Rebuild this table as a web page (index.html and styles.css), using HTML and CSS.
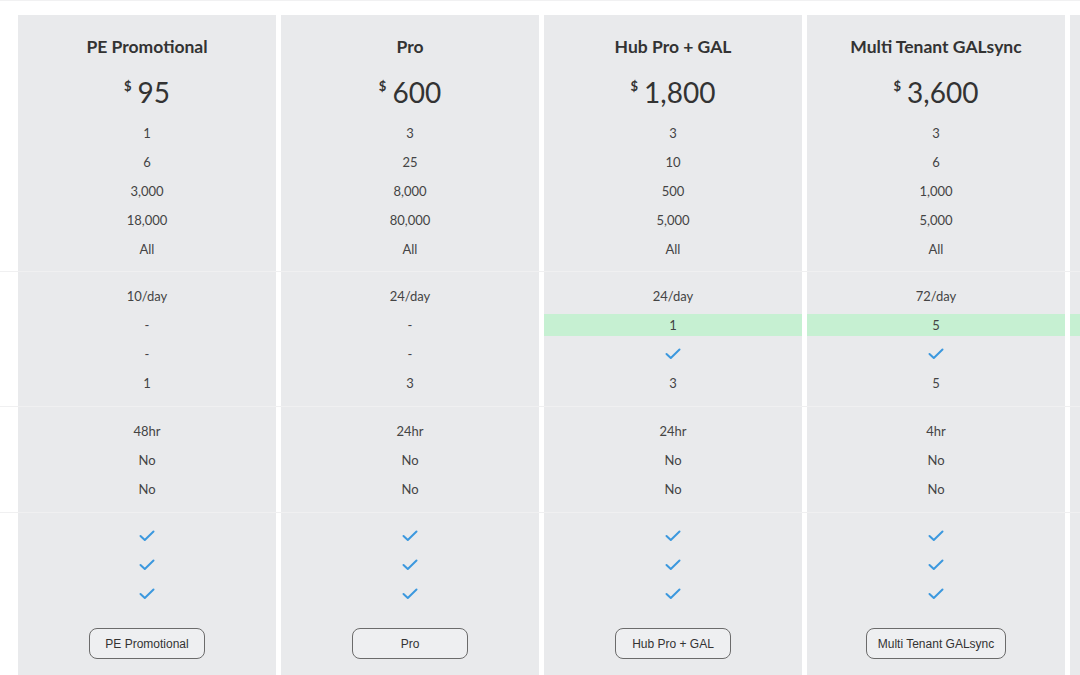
FILE: index.html
```html
<!DOCTYPE html>
<html lang="en">
<head>
<meta charset="utf-8">
<title>Pricing comparison</title>
<link rel="stylesheet" href="styles.css">
</head>
<body>
<svg width="0" height="0" class="defs" aria-hidden="true">
  <defs>
    <symbol id="tick" viewBox="0 0 16 12">
      <polyline points="1.5,6 5.8,10 14.5,1.5" fill="none" stroke="currentColor" stroke-width="2" stroke-linecap="round" stroke-linejoin="round"/>
    </symbol>
  </defs>
</svg>
<div class="page">
  <div class="table">
    <div class="row head">
      <div class="stub"></div>
      <div class="cell">
        <h3 class="plan">PE Promotional</h3>
        <div class="price"><span class="cur">$</span>95</div>
        <ul class="vals"><li>1</li><li>6</li><li>3,000</li><li>18,000</li><li>All</li></ul>
      </div>
      <div class="cell">
        <h3 class="plan">Pro</h3>
        <div class="price"><span class="cur">$</span>600</div>
        <ul class="vals"><li>3</li><li>25</li><li>8,000</li><li>80,000</li><li>All</li></ul>
      </div>
      <div class="cell">
        <h3 class="plan">Hub Pro + GAL</h3>
        <div class="price"><span class="cur">$</span>1,800</div>
        <ul class="vals"><li>3</li><li>10</li><li>500</li><li>5,000</li><li>All</li></ul>
      </div>
      <div class="cell">
        <h3 class="plan">Multi Tenant GALsync</h3>
        <div class="price"><span class="cur">$</span>3,600</div>
        <ul class="vals"><li>3</li><li>6</li><li>1,000</li><li>5,000</li><li>All</li></ul>
      </div>
      <div class="cell">
        <h3 class="plan">&nbsp;</h3>
        <div class="price">&nbsp;</div>
        <ul class="vals"><li>&nbsp;</li><li>&nbsp;</li><li>&nbsp;</li><li>&nbsp;</li><li>&nbsp;</li></ul>
      </div>
    </div>

    <div class="row">
      <div class="stub"></div>
      <div class="cell">
        <ul class="vals"><li>10/day</li><li>-</li><li>-</li><li>1</li></ul>
      </div>
      <div class="cell">
        <ul class="vals"><li>24/day</li><li>-</li><li>-</li><li>3</li></ul>
      </div>
      <div class="cell">
        <ul class="vals"><li>24/day</li><li class="hl">1</li><li><svg class="tick"><use href="#tick"/></svg></li><li>3</li></ul>
      </div>
      <div class="cell">
        <ul class="vals"><li>72/day</li><li class="hl">5</li><li><svg class="tick"><use href="#tick"/></svg></li><li>5</li></ul>
      </div>
      <div class="cell">
        <ul class="vals"><li>&nbsp;</li><li class="hl">&nbsp;</li><li>&nbsp;</li><li>&nbsp;</li></ul>
      </div>
    </div>

    <div class="row">
      <div class="stub"></div>
      <div class="cell"><ul class="vals"><li>48hr</li><li>No</li><li>No</li></ul></div>
      <div class="cell"><ul class="vals"><li>24hr</li><li>No</li><li>No</li></ul></div>
      <div class="cell"><ul class="vals"><li>24hr</li><li>No</li><li>No</li></ul></div>
      <div class="cell"><ul class="vals"><li>4hr</li><li>No</li><li>No</li></ul></div>
      <div class="cell"><ul class="vals"><li>&nbsp;</li><li>&nbsp;</li><li>&nbsp;</li></ul></div>
    </div>

    <div class="row last">
      <div class="stub"></div>
      <div class="cell">
        <ul class="vals"><li><svg class="tick"><use href="#tick"/></svg></li><li><svg class="tick"><use href="#tick"/></svg></li><li><svg class="tick"><use href="#tick"/></svg></li></ul>
        <button class="btn">PE Promotional</button>
      </div>
      <div class="cell">
        <ul class="vals"><li><svg class="tick"><use href="#tick"/></svg></li><li><svg class="tick"><use href="#tick"/></svg></li><li><svg class="tick"><use href="#tick"/></svg></li></ul>
        <button class="btn">Pro</button>
      </div>
      <div class="cell">
        <ul class="vals"><li><svg class="tick"><use href="#tick"/></svg></li><li><svg class="tick"><use href="#tick"/></svg></li><li><svg class="tick"><use href="#tick"/></svg></li></ul>
        <button class="btn">Hub Pro + GAL</button>
      </div>
      <div class="cell">
        <ul class="vals"><li><svg class="tick"><use href="#tick"/></svg></li><li><svg class="tick"><use href="#tick"/></svg></li><li><svg class="tick"><use href="#tick"/></svg></li></ul>
        <button class="btn">Multi Tenant GALsync</button>
      </div>
      <div class="cell">
        <ul class="vals"><li>&nbsp;</li><li>&nbsp;</li><li>&nbsp;</li></ul>
      </div>
    </div>
  </div>
</div>
</body>
</html>
```

FILE: styles.css
```css
html, body {
  margin: 0;
  padding: 0;
  background: #ffffff;
  overflow: hidden;
}

body {
  font-family: Lato, "Noto Sans", sans-serif;
  color: #444;
}

.defs {
  position: absolute;
  width: 0;
  height: 0;
}

.page {
  border-top: 1px solid #f1f1f2;
  padding-top: 14px;
  width: 1340px;
}

.table {
  display: flex;
  flex-direction: column;
}

.row {
  display: grid;
  grid-template-columns: 13px repeat(5, 258px);
  column-gap: 5px;
  border-top: 1px solid #f0f0f1;
}

.row.head {
  border-top: none;
}

.stub {
  background: #ffffff;
}

.cell {
  background: #e9eaec;
  padding: 13px 0 12px;
  display: flex;
  flex-direction: column;
  align-items: center;
}

.head .cell {
  padding-top: 20px;
  padding-bottom: 11px;
}

.last .cell {
  padding-top: 12px;
  padding-bottom: 24px;
}

.plan {
  margin: 0;
  font-size: 17.5px;
  line-height: 24px;
  font-weight: 700;
  color: #333;
}

.price {
  margin-top: 15px;
  font-size: 28px;
  line-height: 36px;
  color: #333;
  display: flex;
  align-items: flex-start;
}

.cur {
  font-size: 13px;
  line-height: 16px;
  margin-right: 6px;
  margin-top: 4px;
  font-weight: 700;
}

.vals {
  list-style: none;
  margin: 0;
  padding: 0;
  width: 100%;
  display: flex;
  flex-direction: column;
  gap: 7px;
}

.head .vals {
  margin-top: 12px;
}

.vals li {
  height: 22px;
  line-height: 22px;
  font-size: 13px;
  text-align: center;
  color: #444;
  display: flex;
  justify-content: center;
  align-items: center;
}

.vals li.hl {
  background: #c6f0d2;
}

.tick {
  width: 16px;
  height: 12px;
  color: #3b98de;
}

.btn {
  margin-top: 23px;
  min-width: 116px;
  height: 31px;
  padding: 0 11px;
  border: 1.5px solid #6b6b6b;
  border-radius: 8px;
  background: #eeeff1;
  font-family: "Liberation Sans", Arial, sans-serif;
  font-size: 12px;
  color: #333;
}
```
